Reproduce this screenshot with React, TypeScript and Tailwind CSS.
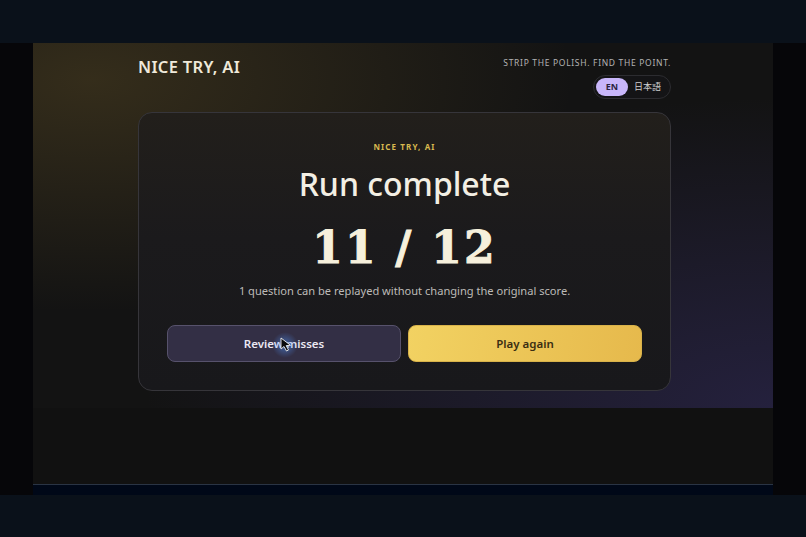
// Result screen shown inside a dark presentation frame
function Cursor() {
  return (
    <div className="pointer-events-none absolute left-[239px] top-[289px] h-[26px] w-[26px]">
      <div className="absolute inset-0 rounded-full bg-[radial-gradient(circle,rgba(80,150,255,0.55),transparent_70%)]" />
      <svg className="absolute left-[8px] top-[5px]" width="14" height="15" viewBox="0 0 14 15">
        <path d="M1 1 L1 12 L4 9.5 L6.5 14 L8.5 13 L6.2 8.6 L10.5 8.3 Z" fill="#0b0b0d" stroke="#f2f2f2" strokeWidth="0.9" strokeLinejoin="round" />
      </svg>
    </div>
  )
}

function Header() {
  return (
    <div className="flex items-start justify-between pt-[14px]">
      <h1 className="text-[16.5px] leading-[20px] font-semibold tracking-[0.02em] text-[#efe9da]">NICE TRY, AI</h1>
      <div className="flex flex-col items-end">
        <p className="text-[8.5px] leading-[12px] tracking-[0.08em] text-[#b3b3b3]">STRIP THE POLISH. FIND THE POINT.</p>
        <div className="mt-[6px] flex h-[24px] items-center gap-[6px] rounded-full border border-[#2c2c30] bg-[#141416] px-[2px] pr-[9px]">
          <span className="flex h-[18px] w-[32px] items-center justify-center rounded-full bg-[#c8b6fa] text-[9px] font-bold text-[#2a2340]">EN</span>
          <span className="text-[9px] text-[#cfcfcf] [font-family:'Noto_Sans_CJK_JP',sans-serif]">日本語</span>
        </div>
      </div>
    </div>
  )
}

function ResultCard() {
  return (
    <div className="relative mt-[13px] rounded-[14px] border border-[#36353a] bg-[linear-gradient(180deg,#221f1b_0%,#1b1a1c_45%,#18181b_100%)] px-[28px] pt-[28px] pb-[28px] text-center">
      <p className="text-[8px] leading-[12px] font-bold tracking-[0.14em] text-[#d8b94f]">NICE TRY, AI</p>
      <h2 className="mt-[12px] text-[32px] leading-[38px] font-medium text-[#f3efe4]">Run complete</h2>
      <p className="mt-[21px] text-[44px] leading-[48px] font-bold tracking-[0.05em] text-[#f6f0dc] [-webkit-text-stroke:0.9px_#f6f0dc] [font-family:'DejaVu_Serif',serif]">
        11 / 12
      </p>
      <p className="mt-[10px] text-[11.1px] leading-[18px] text-[#bdbbb8]">1 question can be replayed without changing the original score.</p>
      <div className="mt-[25px] grid grid-cols-2 gap-[7px]">
        <button className="h-[37px] rounded-[8px] border border-[#57526c] bg-[#332f45] text-[11.5px] font-semibold text-[#ebe8f2]">Review misses</button>
        <button className="h-[37px] rounded-[8px] border border-[#d8b24a] bg-[linear-gradient(100deg,#f2d262,#e6b94c)] text-[11.5px] font-semibold text-[#3a2e12]">Play again</button>
      </div>
    </div>
  )
}

export default function App() {
  return (
    <div className="flex h-[537px] w-[806px] flex-col overflow-hidden bg-[#0a111a] [font-family:'Noto_Sans','Open_Sans',sans-serif]">
      <div className="h-[43px] shrink-0" />
      <div className="flex h-[452px] shrink-0">
        <div className="w-[33px] bg-[#060609]" />
        <div className="relative flex w-[740px] flex-col">
          <div className="h-[365px] bg-[#131313] bg-[radial-gradient(ellipse_at_8%_10%,rgba(130,105,45,0.3),transparent_50%),radial-gradient(ellipse_at_100%_100%,rgba(65,55,130,0.38),transparent_60%)]">
            <div className="ml-[105px] w-[533px]">
              <Header />
              <ResultCard />
            </div>
          </div>
          <div className="flex-1 border-b border-[#2a3444] bg-[#111111]" />
          <div className="h-[10px] bg-[#000818]" />
          <Cursor />
        </div>
        <div className="flex-1 bg-[#060609]" />
      </div>
    </div>
  )
}
